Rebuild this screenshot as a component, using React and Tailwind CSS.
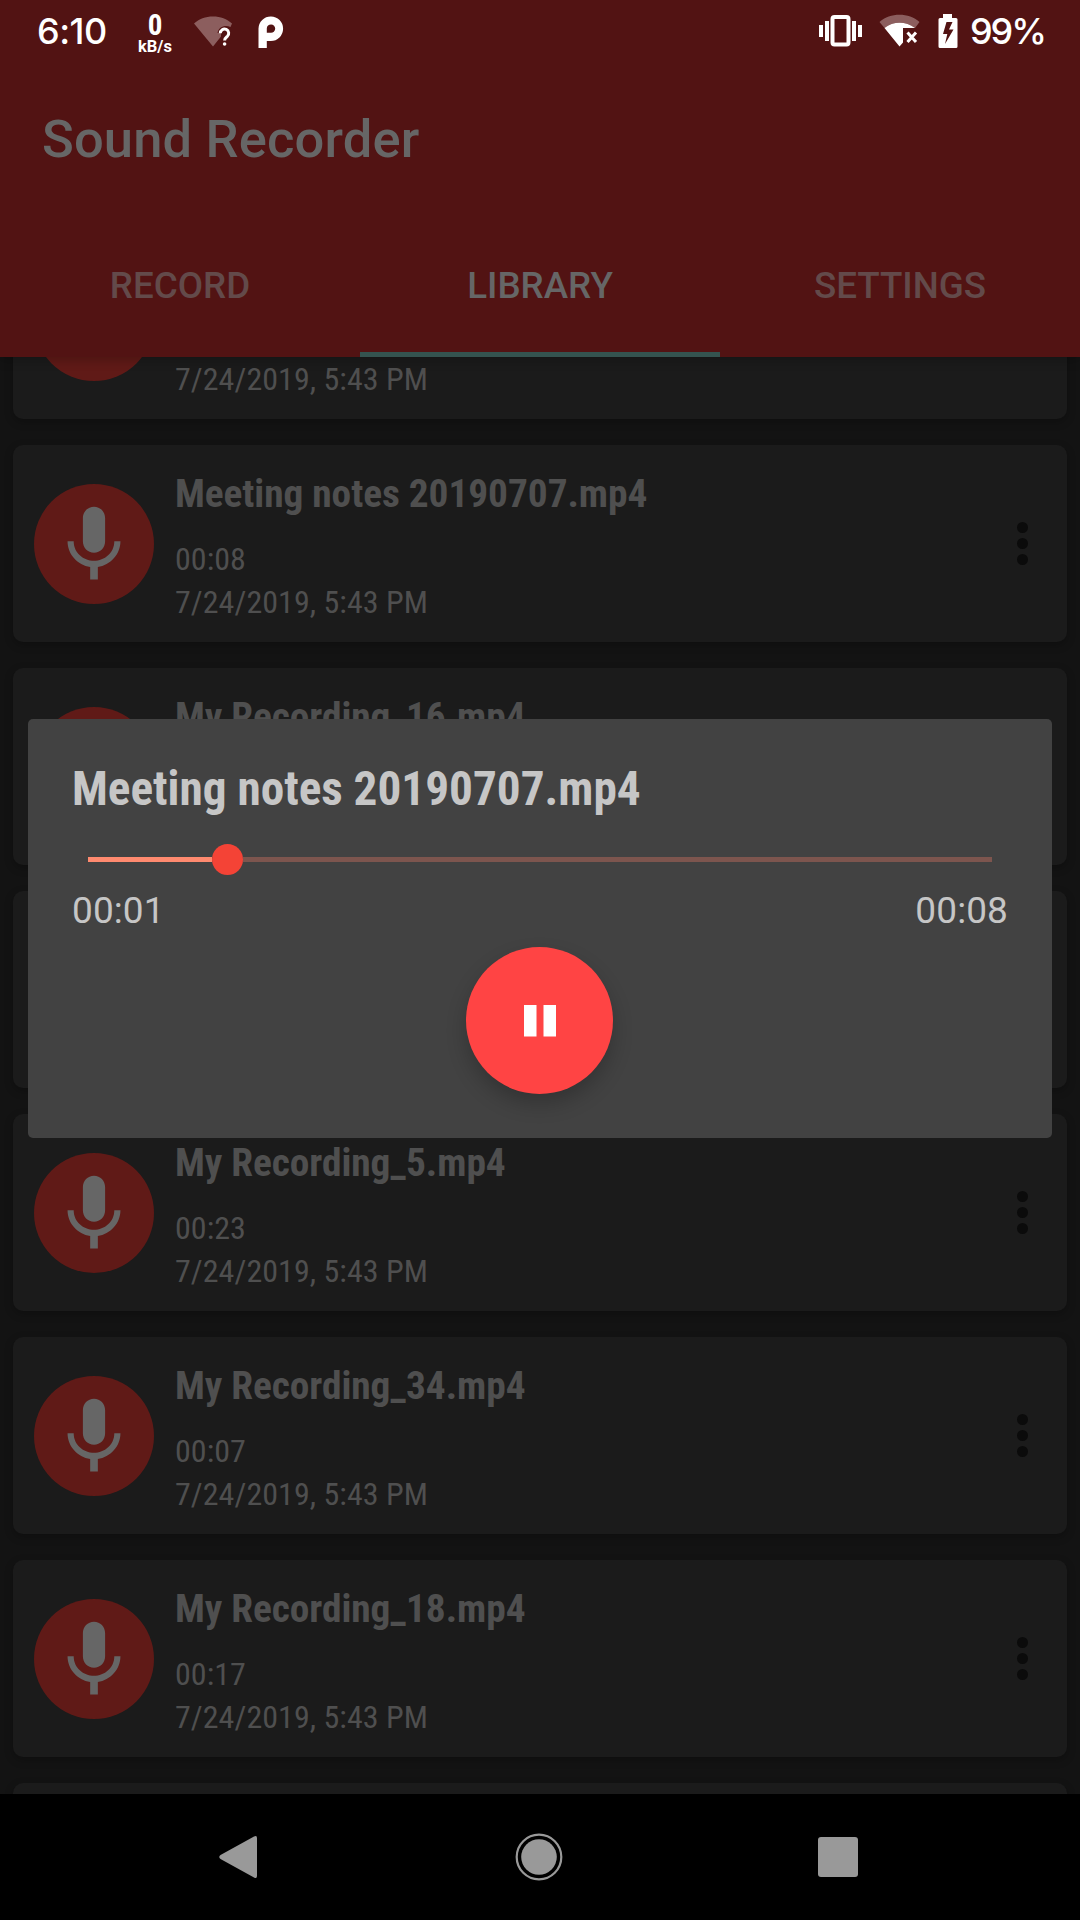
import React from 'react';

const recordings = [
  { id: 1, name: 'My Recording_21.mp4', length: '00:12', date: '7/24/2019, 5:43 PM' },
  { id: 2, name: 'Meeting notes 20190707.mp4', length: '00:08', date: '7/24/2019, 5:43 PM' },
  { id: 3, name: 'My Recording_16.mp4', length: '00:15', date: '7/24/2019, 5:43 PM' },
  { id: 4, name: 'My Recording_9.mp4', length: '00:11', date: '7/24/2019, 5:43 PM' },
  { id: 5, name: 'My Recording_5.mp4', length: '00:23', date: '7/24/2019, 5:43 PM' },
  { id: 6, name: 'My Recording_34.mp4', length: '00:07', date: '7/24/2019, 5:43 PM' },
  { id: 7, name: 'My Recording_18.mp4', length: '00:17', date: '7/24/2019, 5:43 PM' },
  { id: 8, name: 'My Recording_2.mp4', length: '00:09', date: '7/24/2019, 5:43 PM' },
];

const tabs = ['RECORD', 'LIBRARY', 'SETTINGS'];

const StatusBar = () => (
  <div className="flex h-[63px] items-start justify-between text-white">
    <div className="flex items-start">
      <span className="ml-[37px] mt-[10px] w-[71px] whitespace-nowrap font-[Inter,sans-serif] text-[36px] leading-[42px] font-medium tracking-[-0.5px]">
        6:10
      </span>
      <div className="ml-[29px] mt-[12px] flex w-[36px] flex-col items-center font-bold">
        <span className="font-['Roboto_Condensed',Roboto,sans-serif] text-[29px] leading-[27px] font-stretch-condensed">0</span>
        <span className="text-[16.5px] leading-[16px]">kB/s</span>
      </div>
      {/* wifi without internet */}
      <svg className="ml-[21px] mt-[16px]" width="38" height="31" viewBox="0 0 38 31">
        <path d="M0 7.500C5 3 11.500 0.500 19 0.500S33 3 38 7.500L36.500 11C31 8.500 24.500 11 23.500 17H27V20.500L19 30.500Z" fill="#8c5e5e" />
        <path d="M26.300 17.200a4.200 4.200 0 1 1 7 3.200c-1.700 1.400-2.700 2-2.700 4.200" fill="none" stroke="#fff" strokeWidth="3" />
        <circle cx="30.600" cy="28" r="1.800" fill="#fff" />
      </svg>
      {/* P logo */}
      <svg className="ml-[26px] mt-[16px]" width="26" height="32" viewBox="0 0 26 32">
        <path
          fill="#fff"
          fillRule="evenodd"
          d="M0.500 32V12.500A12.300 12.300 0 1 1 12.800 25H8.800V32ZM8.800 16.800H12.800A4.200 4.200 0 1 0 8.800 12.600Z"
        />
      </svg>
    </div>
    <div className="flex items-start">
      {/* vibrate */}
      <svg className="mt-[15px]" width="43" height="32" viewBox="0 0 43 32">
        <g fill="#fff">
          <rect x="0" y="10" width="4" height="12" />
          <rect x="6" y="6" width="4" height="20" />
          <rect x="33" y="6" width="4" height="20" />
          <rect x="39" y="10" width="4" height="12" />
        </g>
        <rect x="13.500" y="2" width="16" height="27.500" rx="2" fill="none" stroke="#fff" strokeWidth="4" />
      </svg>
      {/* wifi */}
      <svg className="ml-[17px] mt-[14px]" width="42" height="33" viewBox="0 0 42 33">
        <path d="M0.500 8C6 3 13 0.800 20.500 0.800S35 3 40.500 8L36 14C27 7 14 7 5.500 14Z" fill="#8c5e5e" />
        <path d="M5.500 14C14 7 27 7 36 14H24V28.500L20.500 32.500Z" fill="#fff" />
        <path d="M28.500 18.500L37 28M37 18.500L28.500 28" stroke="#fff" strokeWidth="3" />
      </svg>
      {/* battery */}
      <svg className="ml-[17px] mt-[14px]" width="20" height="34" viewBox="0 0 20 34">
        <path
          fill="#fff"
          fillRule="evenodd"
          d="M5 0H14V4H18Q19.500 4 19.500 5.500V32.500Q19.500 34 18 34H2Q0.500 34 0.500 32.500V5.500Q0.500 4 2 4H5ZM8.500 8L5 20H9.300L7 30L15.500 15.500H11L14.500 8Z"
        />
      </svg>
      <span className="ml-[12px] mt-[10px] mr-[37px] w-[73px] whitespace-nowrap font-[Inter,sans-serif] text-[36px] leading-[42px] font-medium tracking-[-2.1px]">
        99%
      </span>
    </div>
  </div>
);

const MicIcon = () => (
  <div className="flex h-[120px] w-[120px] items-center justify-center rounded-full bg-[#601a17] pt-[3px]">
    <svg width="92" height="92" viewBox="0 0 24 24" fill="#666666">
      <path d="M12 14c1.660 0 2.900-1.340 2.900-3V5c0-1.660-1.240-3-2.900-3S9.100 3.340 9.100 5v6c0 1.660 1.240 3 2.900 3zm5.300-3c0 3-2.540 5.100-5.300 5.100S6.700 14 6.700 11H5.100c0 3.410 2.620 6.230 5.900 6.720V21h2v-3.280c3.280-.48 5.900-3.300 5.900-6.720h-1.600z" />
    </svg>
  </div>
);

const RecordingCard = ({ recording }) => (
  <div className="flex h-[197px] shrink-0 items-center rounded-[10px] bg-[#1b1b1b] pl-[21px] shadow-[0_3px_8px_rgba(0,0,0,0.25)]">
    <MicIcon />
    <div className="ml-[21px] flex h-full flex-1 flex-col pt-[26px] font-['Roboto_Condensed',Roboto,sans-serif] whitespace-nowrap text-[#4f4f4f] font-stretch-condensed">
      <span className="text-[39.4px] leading-[46px] font-bold tracking-[-0.07px]">{recording.name}</span>
      <span className="mt-[24px] text-[32px] leading-[37px] tracking-[0.05px]">{recording.length}</span>
      <span className="mt-[6px] text-[32px] leading-[37px] tracking-[0.05px]">{recording.date}</span>
    </div>
    <div className="mr-[39px] flex flex-col gap-[5px]">
      <span className="h-[11px] w-[11px] rounded-full bg-[#0b0b0b]" />
      <span className="h-[11px] w-[11px] rounded-full bg-[#0b0b0b]" />
      <span className="h-[11px] w-[11px] rounded-full bg-[#0b0b0b]" />
    </div>
  </div>
);

const PlaybackDialog = () => (
  <div className="absolute top-[719px] left-[28px] z-20 flex h-[419px] w-[1024px] flex-col rounded-[5px] bg-[#424242] px-[44px] text-[#c6c6c6]">
    <h2 className="mt-[42px] font-['Roboto_Condensed',Roboto,sans-serif] text-[47.25px] leading-[56px] font-bold whitespace-nowrap font-stretch-condensed">
      Meeting notes 20190707.mp4
    </h2>
    <div className="mx-[16px] mt-[27px] flex h-[31px] items-center">
      <div className="h-[5px] w-[124px] bg-[#ff8a6f]" />
      <div className="h-[31px] w-[31px] rounded-full bg-[#f44336]" />
      <div className="h-[5px] flex-1 bg-[#7d554e]" />
    </div>
    <div className="mt-[14px] flex justify-between text-[37px] leading-[43px] tracking-[0.1px]">
      <span>00:01</span>
      <span>00:08</span>
    </div>
    <button className="mt-[15px] mr-px flex h-[147px] w-[147px] items-center justify-center self-center rounded-full bg-[#ff4444] shadow-[0_10px_20px_rgba(0,0,0,0.22)]">
      <svg width="32" height="32" viewBox="0 0 32 32" fill="#fff">
        <rect x="0" y="0" width="12.500" height="31.500" />
        <rect x="19.500" y="0" width="12.500" height="31.500" />
      </svg>
    </button>
  </div>
);

const NavigationBar = () => (
  <div className="z-10 flex h-[126px] shrink-0 items-center justify-between bg-black pr-[222px] pl-[219px]">
    <svg width="39" height="44" viewBox="0 0 39 44" fill="#999999">
      <path d="M35 1.500Q38 0 38 3V41Q38 44 35 42.500L1.500 24Q-1 22 1.500 20Z" />
    </svg>
    <svg className="ml-[2px]" width="48" height="48" viewBox="0 0 48 48">
      <circle cx="24" cy="24" r="22.300" fill="none" stroke="#999999" strokeWidth="2.200" />
      <circle cx="24" cy="24" r="17.800" fill="#999999" />
    </svg>
    <div className="h-[40px] w-[40px] rounded-[3px] bg-[#999999]" />
  </div>
);

const App = () => {
  const activeTab = 'LIBRARY';

  return (
    <div className="relative flex h-[1920px] w-[1080px] flex-col overflow-hidden bg-[#131313] font-[Roboto,sans-serif]">
      {/* Header */}
      <div className="z-10 h-[357px] shrink-0 bg-[#521313] shadow-[0_4px_10px_rgba(0,0,0,0.2)]">
        <StatusBar />
        <div className="flex h-[147px] items-center pt-[4px] pl-[42px]">
          <h1 className="text-[52.5px] leading-[62px] font-medium tracking-[0.15px] text-[#666666]">Sound Recorder</h1>
        </div>
        <div className="grid h-[147px] grid-cols-3">
          {tabs.map((tab) => (
            <div
              key={tab}
              className={`flex items-center justify-center border-b-[5px] pt-[10px] text-[36.75px] font-medium ${
                tab === activeTab ? 'border-[#34534f] text-[#666666]' : 'border-transparent text-[#634a4a]'
              }`}
            >
              {tab}
            </div>
          ))}
        </div>
      </div>

      {/* Recordings, scrolled part way down */}
      <div className="flex-1 overflow-hidden">
        <div className="-mt-[135px] flex flex-col gap-[26px] px-[13px]">
          {recordings.map((recording) => (
            <RecordingCard key={recording.id} recording={recording} />
          ))}
        </div>
      </div>

      <NavigationBar />
      <PlaybackDialog />
    </div>
  );
};

export default App;
